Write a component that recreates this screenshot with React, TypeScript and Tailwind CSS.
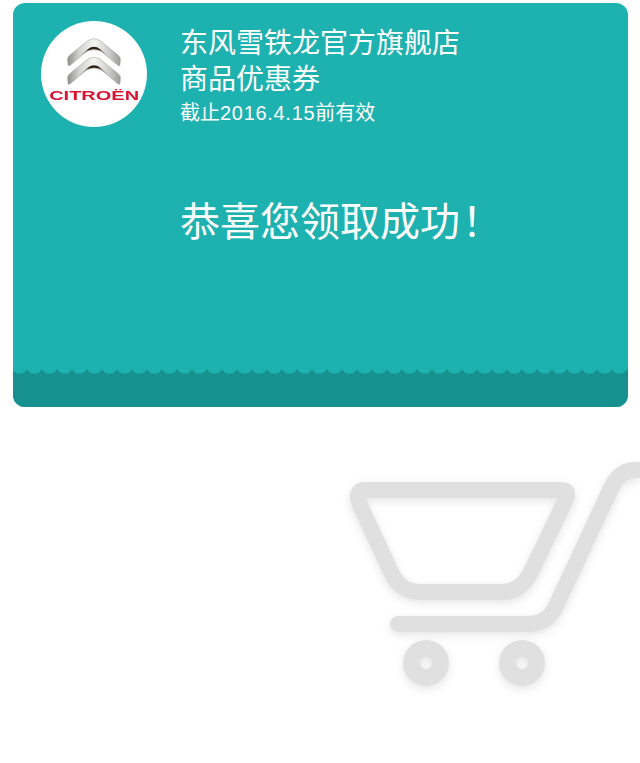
import React from 'react';

const CJK = "font-['Liberation_Sans','Noto_Sans_CJK_SC',sans-serif]";

const CHEVRON = 'M0.6 21 Q0.4 19.5 3 17 L21 2.5 Q27 -1 33 2.5 L51 17 Q53.6 19.5 53.4 21 L53 27 Q52.4 28.6 50.5 27 L35 14 Q27 9.5 19 14 L3.5 27 Q1.6 28.6 1 27 Z';
const WEDGE = 'M12 19 L21 11 Q27 6.5 33 11 L42 19 L34 13 Q27 9.5 20 13 Z';

const Chevrons = () => (
  <svg width="54" height="48" viewBox="0 0 54 48" className="shrink-0">
    <defs>
      <linearGradient id="silver" x1="0" y1="0" x2="1" y2="0">
        <stop offset="0" stopColor="#8f8f8d" />
        <stop offset="0.22" stopColor="#d2d2d0" />
        <stop offset="0.5" stopColor="#f4f4f2" />
        <stop offset="0.78" stopColor="#cdcdcb" />
        <stop offset="1" stopColor="#9a9a98" />
      </linearGradient>
      <linearGradient id="wedge" x1="0" y1="0" x2="1" y2="0">
        <stop offset="0" stopColor="#6b6254" stopOpacity="0.2" />
        <stop offset="0.35" stopColor="#2e2214" />
        <stop offset="0.65" stopColor="#2e2214" />
        <stop offset="1" stopColor="#6b6254" stopOpacity="0.2" />
      </linearGradient>
    </defs>
    <path d={CHEVRON} fill="url(#silver)" stroke="#9a9a98" strokeWidth="0.5" />
    <path d={WEDGE} fill="url(#wedge)" />
    <g transform="translate(0 18.5)">
      <path d={CHEVRON} fill="url(#silver)" stroke="#9a9a98" strokeWidth="0.5" />
      <path d={WEDGE} fill="url(#wedge)" />
    </g>
  </svg>
);

const Scallops = () => (
  <svg className="block" width="615" height="6" viewBox="0 0 615 6">
    <defs>
      <pattern id="scallop" x="-1" y="0" width="15" height="6" patternUnits="userSpaceOnUse">
        <path d="M0 0 A7.5 5.5 0 0 0 15 0 Z" fill="#1db1b0" />
      </pattern>
    </defs>
    <rect width="615" height="6" fill="#16918f" />
    <rect width="615" height="6" fill="url(#scallop)" />
  </svg>
);

const Cart = () => (
  <svg className="block ml-[340px] blur-[0.7px] drop-shadow-[0_3px_4px_rgba(0,0,0,0.1)]" width="300" height="250" viewBox="340 450 300 250" fill="none" stroke="#e0e0e0" strokeWidth="16" strokeLinecap="round" strokeLinejoin="round">
    <path d="M365 490 H561 Q570 490 566 499 L531 572 Q521 592 501 592 H421 Q401 592 392 574 L360 505 Q354 490 365 490 Z" />
    <path d="M398 624 H527 Q548 624 556 606 L612 486 Q620 470 636 470 H650" />
    <circle cx="426" cy="663" r="14.5" strokeWidth="17" />
    <circle cx="522" cy="663" r="14.5" strokeWidth="17" />
  </svg>
);

export default function App() {
  return (
    <div className={`w-[640px] h-[763px] overflow-hidden bg-white ${CJK}`}>
      <div className="pt-[3px] pl-[13px]">
        <div className="w-[615px] h-[404px] rounded-xl overflow-hidden bg-[#1db1b0] flex flex-col text-white">
          <div className="flex pl-[28px] pt-[18px]">
            <div className="w-[106px] h-[106px] rounded-full bg-white flex flex-col items-center pt-[17px] shrink-0">
              <Chevrons />
              <span className="mt-[3px] text-[12.5px] leading-[14px] font-bold text-[#d8122f] scale-x-[1.6] font-['Liberation_Sans',sans-serif]">CITROËN</span>
            </div>
            <div className="ml-[33px] pt-[5px]">
              <div className="text-[28px] leading-[36px]">东风雪铁龙官方旗舰店</div>
              <div className="text-[28px] leading-[36px]">商品优惠券</div>
              <div className="text-[20px] leading-[30px]">截止<span className="tracking-[0.7px]">2016.4.15</span>前有效</div>
            </div>
          </div>
          <div className="ml-[167px] mt-[66px] text-[40px] leading-[56px]">恭喜您领取成功<span className="ml-[2px]">！</span></div>
          <div className="mt-auto">
            <Scallops />
            <div className="h-[33px] bg-[#16918f]" />
          </div>
        </div>
      </div>
      <div className="mt-[43px]">
        <Cart />
      </div>
    </div>
  );
}
